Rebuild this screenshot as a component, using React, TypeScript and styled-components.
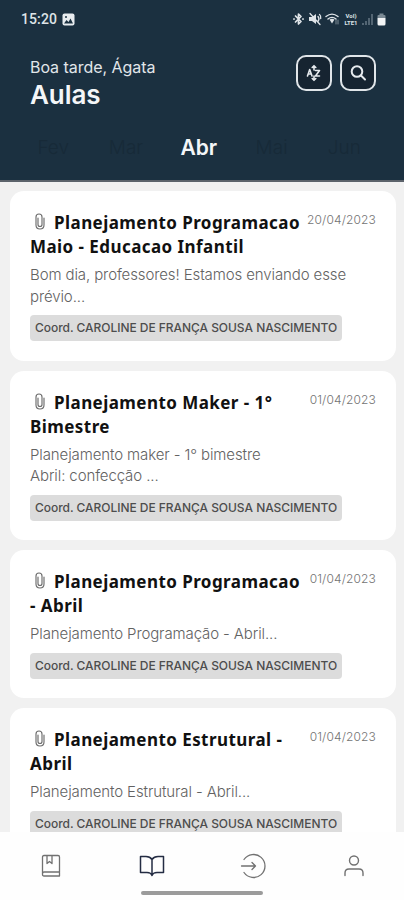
import React from "react";
import styled, { createGlobalStyle } from "styled-components";

const Global = createGlobalStyle`
  * { box-sizing: border-box; }
  body { margin: 0; background: #f1f1f1; font-family: Inter, "Noto Sans", sans-serif; }
`;

const Screen = styled.div`
  width: 404px;
  height: 900px;
  display: flex;
  flex-direction: column;
  overflow: hidden;
  background: #f1f1f1;
`;

const Header = styled.header`
  flex: none;
  height: 182px;
  overflow: hidden;
  background: #1b3040;
  border-bottom: 2px solid #5c636b;
  color: #f4f6f8;
`;

const StatusBar = styled.div`
  height: 38px;
  padding: 0 18px 0 21px;
  display: flex;
  align-items: center;
  justify-content: space-between;
`;

const StatusGroup = styled.div<{ $gap: number }>`
  display: flex;
  align-items: center;
  gap: ${(p) => p.$gap}px;
`;

const Clock = styled.span`
  font: 500 14px/18px Roboto, sans-serif;
  letter-spacing: 0.1px;
  color: #dfe4e8;
`;

const Volte = styled.span`
  width: 16px;
  display: flex;
  flex-direction: column;
  font: 700 6px/7px Roboto, sans-serif;
  text-align: center;
  color: #dfe4e8;
`;

const HeadRow = styled.div`
  height: 80px;
  padding: 17px 28px 0 30px;
  display: flex;
  justify-content: space-between;
`;

const Greeting = styled.div`
  font-size: 16px;
  line-height: 24px;
  letter-spacing: -0.05px;
  color: #e1e6ea;
`;

const Heading = styled.h1`
  margin: 0;
  font-size: 26px;
  line-height: 32px;
  font-weight: 600;
  letter-spacing: -0.05px;
`;

const Actions = styled.div`
  display: flex;
  gap: 8px;
`;

const ActionButton = styled.button`
  width: 36px;
  height: 36px;
  padding: 0;
  display: grid;
  place-items: center;
  color: #e6eaee;
  background: #162431;
  border: 2px solid #e0e5e9;
  border-radius: 10px;
`;

const Months = styled.div`
  margin-left: -56px;
  height: 58px;
  display: grid;
  grid-template-columns: repeat(6, 72.8px);
`;

const Month = styled.span<{ $active?: boolean }>`
  text-align: center;
  font-size: ${(p) => (p.$active ? 21 : 19)}px;
  line-height: 59px;
  font-weight: ${(p) => (p.$active ? 600 : 300)};
  color: ${(p) => (p.$active ? "#f4f6f8" : "#172a38")};
`;

const List = styled.main`
  flex: 1;
  min-height: 0;
  overflow: hidden;
  padding: 9px 8.5px 0 10px;
  display: flex;
  flex-direction: column;
  gap: 10px;
`;

const Card = styled.article`
  flex: none;
  padding: 20px 19.5px 19.5px 20px;
  background: #fff;
  border-radius: 14px;
`;

const CardTop = styled.div`
  display: flex;
  justify-content: space-between;
`;

const Title = styled.h2`
  margin: 0;
  width: 274px;
  white-space: nowrap;
  font: 700 17px/24px "Noto Sans", sans-serif;
  letter-spacing: 0.44px;
  color: #111;
`;

const Clip = styled.svg`
  width: 10px;
  height: 18px;
  margin: 0 9px 0 5px;
  vertical-align: -2px;
`;

const DateText = styled.time`
  font-size: 12px;
  line-height: 17px;
  font-weight: 300;
  letter-spacing: 0.15px;
  color: #737373;
  white-space: nowrap;
`;

const Summary = styled.p`
  margin: 5px 0 8px;
  font-size: 15px;
  line-height: 21.5px;
  font-weight: 300;
  letter-spacing: -0.11px;
  color: #626262;
  white-space: pre;
`;

const Chip = styled.div`
  width: 312px;
  height: 26px;
  padding-left: 5px;
  border-radius: 4px;
  background: #dcdcdc;
  color: #4d4d4d;
  font-size: 12px;
  line-height: 26px;
  font-weight: 500;
  letter-spacing: -0.04px;
  white-space: nowrap;
`;

const BottomBar = styled.nav`
  flex: none;
  height: 68px;
  background: #fefefe;
`;

const Tabs = styled.div`
  height: 59px;
  padding-top: 9px;
  display: grid;
  grid-template-columns: repeat(4, 101px);
  align-items: center;
  justify-items: center;
`;

const Tab = styled.button<{ $active?: boolean }>`
  display: flex;
  padding: 0;
  border: 0;
  background: none;
  color: ${(p) => (p.$active ? "#242c43" : "#717171")};
`;

const HomeHandle = styled.div`
  width: 122px;
  height: 4px;
  margin: 0 auto;
  border-radius: 2px;
  background: #9b9b9b;
`;

const stroke = {
  fill: "none",
  stroke: "currentColor",
  strokeLinecap: "round" as const,
  strokeLinejoin: "round" as const,
};

type Lesson = { title: [string, string]; date: string; body: string };

const lessons: Lesson[] = [
  { title: ["Planejamento Programacao", "Maio - Educacao Infantil"], date: "20/04/2023", body: "Bom dia, professores! Estamos enviando esse\nprévio..." },
  { title: ["Planejamento Maker - 1°", "Bimestre"], date: "01/04/2023", body: "Planejamento maker - 1° bimestre\nAbril: confecção ..." },
  { title: ["Planejamento Programacao", "- Abril"], date: "01/04/2023", body: "Planejamento Programação - Abril..." },
  { title: ["Planejamento Estrutural -", "Abril"], date: "01/04/2023", body: "Planejamento Estrutural - Abril..." },
];

const StatusIcons = () => (
  <StatusGroup $gap={3}>
    <svg width="13" height="14" viewBox="0 0 13 14" {...stroke} color="#dfe4e8" strokeWidth="1.7">
      <path d="M3.5 4 9 9.5 6.5 12V2L9 4.5 3.5 10M1.8 7h.4M10.8 7h.4" />
    </svg>
    <svg width="14" height="14" viewBox="0 0 14 14" color="#dfe4e8">
      <path d="M1 5h3l4-3v10L4 9H1Z" fill="currentColor" />
      <path d="m2 1.5 10 11M10 4.5q2 2.5 0 5M11.5 2.5q1.5 1 1.2 4" {...stroke} strokeWidth="1.3" />
    </svg>
    <svg width="15" height="14" viewBox="0 0 15 14" color="#dfe4e8">
      <path d="M1 4.5q6-4.7 12 0M3 7q4-3.3 8 0" {...stroke} strokeWidth="1.4" />
      <path d="m4.5 7.5 2.5 4 2.5-4q-2.5-1.5-5 0Z" fill="currentColor" />
      <path d="M11 8v4m2-4v4" {...stroke} stroke="#7f8c96" />
    </svg>
    <Volte>
      <span>VoI)</span>
      <span>LTE1</span>
    </Volte>
    <svg width="12" height="13" viewBox="0 0 12 13" fill="#536573">
      <path d="M0 10h2v2H0zM3 8h2v4H3zM6 5h2v7H6zM9 1h2v11H9z" />
    </svg>
    <svg width="9" height="13" viewBox="0 0 9 13">
      <path d="M2.5.5h4V2h1q1 0 1 1v2H.5V3q0-1 1-1h1Z" fill="#7a8994" />
      <path d="M.5 5h8v6q0 1.5-1.5 1.5H2Q.5 12.5.5 11Z" fill="#f2f4f5" />
    </svg>
  </StatusGroup>
);

const Paperclip = () => (
  <Clip viewBox="0 0 10 18" {...stroke} color="#6c6c6c" strokeWidth="1.15">
    <path d="M3 5v6.5q0 2 2 2t2-2V4Q7 1 4 1T1 4v8q0 4 4 4t4-4V5" />
  </Clip>
);

export default function App() {
  return (
    <Screen>
      <Global />
      <Header>
        <StatusBar>
          <StatusGroup $gap={5}>
            <Clock>15:20</Clock>
            <svg width="13" height="13" viewBox="0 0 13 13">
              <rect x="0.5" y="0.5" width="12" height="12" rx="2" fill="#e8ecef" />
              <path d="m2 10.500 2.500-3.500 2 2 2-3.500 2.500 5Z" fill="#1b3040" />
              <circle cx="4" cy="4" r="1" fill="#1b3040" />
            </svg>
          </StatusGroup>
          <StatusIcons />
        </StatusBar>
        <HeadRow>
          <div>
            <Greeting>Boa tarde, Ágata</Greeting>
            <Heading>Aulas</Heading>
          </div>
          <Actions>
            <ActionButton aria-label="Ordenar">
              <svg width="18" height="20" viewBox="0 0 18 20" {...stroke} strokeWidth="1.6">
                <path d="m2.500 13 2.200-6.500L7 13M3.500 11H6M10.500 7.500h4l-4 5.500h4M7.200 4.500 9 2.700l1.800 1.800M7.200 15.500 9 17.300l1.800-1.800M9 3v4M9 13v4" />
              </svg>
            </ActionButton>
            <ActionButton aria-label="Buscar">
              <svg width="18" height="18" viewBox="0 0 18 18" {...stroke} strokeWidth="2">
                <circle cx="8" cy="7.5" r="5.3" />
                <path d="m12 11.500 4 4" />
              </svg>
            </ActionButton>
          </Actions>
        </HeadRow>
        <Months>
          <Month>Jan</Month>
          <Month>Fev</Month>
          <Month>Mar</Month>
          <Month $active>Abr</Month>
          <Month>Mai</Month>
          <Month>Jun</Month>
        </Months>
      </Header>
      <List>
        {lessons.map((l) => (
          <Card key={l.title.join()}>
            <CardTop>
              <Title>
                <Paperclip />
                {l.title[0]}
                <br />
                {l.title[1]}
              </Title>
              <DateText>{l.date}</DateText>
            </CardTop>
            <Summary>{l.body}</Summary>
            <Chip>Coord. CAROLINE DE FRANÇA SOUSA NASCIMENTO</Chip>
          </Card>
        ))}
      </List>
      <BottomBar>
        <Tabs>
          <Tab aria-label="Diário">
            <svg width="20" height="24" viewBox="0 0 20 24" {...stroke} strokeWidth="1.3">
              <path d="M3 1.500h14q1.500 0 1.500 1.500v19H3q-1.500 0-1.500-1.500V3Q1.500 1.500 3 1.500ZM1.500 20Q1.500 18 3 18h15.500M6 2v7.500l2.500-2 2.500 2V2" />
            </svg>
          </Tab>
          <Tab $active aria-label="Aulas">
            <svg width="26" height="22" viewBox="0 0 26 22" {...stroke} strokeWidth="1.5">
              <path d="M13 4.500Q11 1.500 7 1.500H1.500v16H8q4 0 5 3 1-3 5-3h6.500v-16H19q-4 0-6 3ZM13 4.500v16" />
            </svg>
          </Tab>
          <Tab aria-label="Entrada">
            <svg width="26" height="26" viewBox="0 0 26 26" {...stroke} strokeWidth="1.3">
              <path d="M4 6.500a11.500 11.500 0 1 1 0 13M1.500 13h14M12 9.500l3.500 3.500-3.500 3.500" />
            </svg>
          </Tab>
          <Tab aria-label="Perfil">
            <svg width="20" height="22" viewBox="0 0 20 22" {...stroke} strokeWidth="1.4">
              <circle cx="10" cy="5.5" r="4.5" />
              <path d="M1 20.500V18q0-4 4-4h10q4 0 4 4v2.500" />
            </svg>
          </Tab>
        </Tabs>
        <HomeHandle />
      </BottomBar>
    </Screen>
  );
}
